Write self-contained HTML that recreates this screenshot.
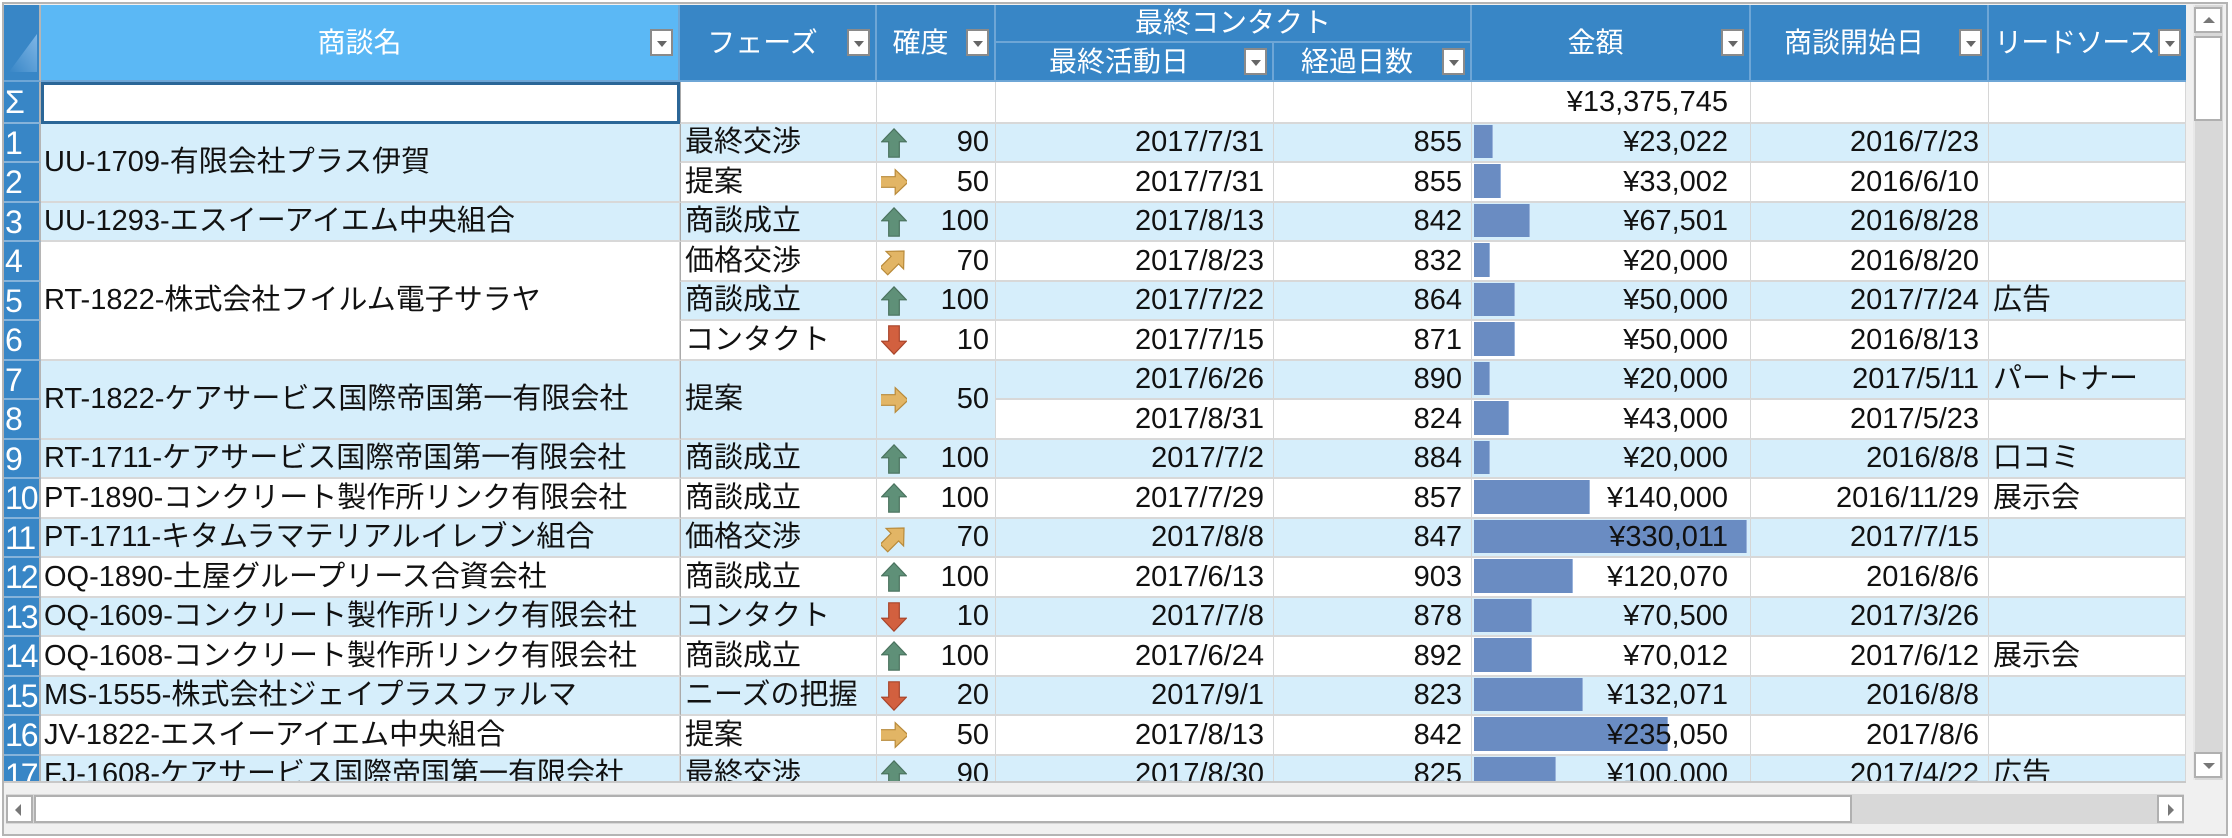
<!DOCTYPE html>
<html><head><meta charset="utf-8">
<style>
*{box-sizing:border-box;margin:0;padding:0}
body{width:2232px;height:838px;background:#fff;overflow:hidden;font-family:"Liberation Sans","Noto Sans CJK JP",sans-serif;position:relative}
.frame{position:absolute;left:2px;top:2px;width:2226px;height:834px;border:2px solid #b4b4b4;background:#f0f0f0}
.grid{position:absolute;left:4px;top:5px;width:2182px;height:776px;overflow:hidden;background:#fff}
table{border-collapse:separate;border-spacing:0;table-layout:fixed;width:2182px}
td,th{overflow:hidden;white-space:nowrap;font-size:29px;color:#111;font-weight:normal;border-right:1px solid #d6d6d6;border-bottom:2px solid #d8d8d8;position:relative;line-height:1}
th{background:#3886c6;color:#fff;border-right:2px solid #6ea6d6;border-bottom:2px solid #6ea6d6;text-align:center;font-size:28px}
th.sel{background:#5bb8f5}
th .t{display:inline-block;padding-right:30px}
th.ls2 .t{padding-right:26px;letter-spacing:-1px}
.dd{position:absolute;right:5px;top:50%;margin-top:-14px;width:23px;height:27px;background:#fff;border:2px solid #8a8a8a}
.dd:after{content:"";position:absolute;left:5px;top:10px;border-left:5px solid transparent;border-right:5px solid transparent;border-top:6px solid #666}
td.rh{background:#3886c6;color:#fff;border-right:2px solid #b5b5b5;border-bottom:2px solid #86b3da;padding-left:1px;font-size:32px;text-align:left;letter-spacing:-2px}
td.sig{background:#5bb8f5}
tr.b td{background:#d6eefb}
tr.w td{background:#fff}
tr.b td.rh,tr.w td.rh{background:#3886c6}
td.n{padding-left:3px}
td.ph{padding-left:4px;border-left:1px solid #aaa}
td.r{text-align:right;padding-right:9px}
td.m{text-align:right;padding-right:22px}
td.p{text-align:right;padding-right:6px}
td.p svg{position:absolute;left:4px;top:50%;margin-top:-17px}
td.ls{padding-left:4px}
.bar{position:absolute;left:2px;top:1px;bottom:3px;background:#6a8cc2;border-right:1px solid #99b3db}
.mt{position:relative}
td.selc{border:3px solid #2b6697;background:#fff}
</style></head><body>
<svg width="0" height="0" style="position:absolute">
<defs>
<polygon id="arr" points="11,1 21.5,12 15.5,12 15.5,25 6.5,25 6.5,12 0.5,12"/>
</defs>
</svg>
<div class="frame"></div>
<div class="grid">
<table>
<colgroup><col style="width:37px"><col style="width:639px"><col style="width:197px"><col style="width:119px"><col style="width:278px"><col style="width:198px"><col style="width:279px"><col style="width:238px"><col style="width:197px"></colgroup>
<tr style="height:38px">
<th rowspan="2" style="background:#3886c6;border-right:2px solid #b5b5b5"><svg width="30" height="40" style="position:absolute;right:2px;bottom:6px"><defs><linearGradient id="g" x1="0" y1="1" x2="1" y2="0"><stop offset="0" stop-color="#3886c6"/><stop offset="1" stop-color="#7fb6e6"/></linearGradient></defs><polygon points="30,0 30,38 2,38" fill="url(#g)"/></svg></th>
<th rowspan="2" class="sel"><span class="t" style="padding-right:0">商談名</span><span class="dd"></span></th>
<th rowspan="2"><span class="t">フェーズ</span><span class="dd"></span></th>
<th rowspan="2"><span class="t">確度</span><span class="dd"></span></th>
<th colspan="2">最終コンタクト</th>
<th rowspan="2"><span class="t">金額</span><span class="dd"></span></th>
<th rowspan="2"><span class="t">商談開始日</span><span class="dd"></span></th>
<th rowspan="2" class="ls2" style="border-right:none"><span class="t">リードソース</span><span class="dd"></span></th>
</tr>
<tr style="height:39px">
<th><span class="t">最終活動日</span><span class="dd"></span></th>
<th><span class="t">経過日数</span><span class="dd"></span></th>
</tr>
<tr style="height:42px" class="w">
<td class="rh sig">Σ</td><td class="selc"></td><td class="ph"></td><td></td><td></td><td></td><td class="m">¥13,375,745</td><td></td><td></td>
</tr>
<tr class="b" style="height:39px"><td class="rh">1</td><td class="n" rowspan="2">UU-1709-有限会社プラス伊賀</td><td class="ph">最終交渉</td><td class="p"><svg width="26" height="34" viewBox="0 0 22 26"><use href="#arr" fill="#5f9078" stroke="#4a725e"/></svg>90</td><td class="r">2017/7/31</td><td class="r">855</td><td class="m"><div class="bar" style="width:19px"></div><span class="mt">¥23,022</span></td><td class="r">2016/7/23</td><td class="ls"></td></tr>
<tr class="w" style="height:40px"><td class="rh">2</td><td class="ph">提案</td><td class="p"><svg width="26" height="34" viewBox="0 0 22 26"><use href="#arr" fill="#e2b565" stroke="#b88a3a" transform="rotate(90 11 13)"/></svg>50</td><td class="r">2017/7/31</td><td class="r">855</td><td class="m"><div class="bar" style="width:27px"></div><span class="mt">¥33,002</span></td><td class="r">2016/6/10</td><td class="ls"></td></tr>
<tr class="b" style="height:39px"><td class="rh">3</td><td class="n">UU-1293-エスイーアイエム中央組合</td><td class="ph">商談成立</td><td class="p"><svg width="26" height="34" viewBox="0 0 22 26"><use href="#arr" fill="#5f9078" stroke="#4a725e"/></svg>100</td><td class="r">2017/8/13</td><td class="r">842</td><td class="m"><div class="bar" style="width:56px"></div><span class="mt">¥67,501</span></td><td class="r">2016/8/28</td><td class="ls"></td></tr>
<tr class="w" style="height:40px"><td class="rh">4</td><td class="n" rowspan="3">RT-1822-株式会社フイルム電子サラヤ</td><td class="ph">価格交渉</td><td class="p"><svg width="26" height="34" viewBox="0 0 22 26"><use href="#arr" fill="#e2b565" stroke="#b88a3a" transform="rotate(45 11 13)"/></svg>70</td><td class="r">2017/8/23</td><td class="r">832</td><td class="m"><div class="bar" style="width:16px"></div><span class="mt">¥20,000</span></td><td class="r">2016/8/20</td><td class="ls"></td></tr>
<tr class="b" style="height:39px"><td class="rh">5</td><td class="ph">商談成立</td><td class="p"><svg width="26" height="34" viewBox="0 0 22 26"><use href="#arr" fill="#5f9078" stroke="#4a725e"/></svg>100</td><td class="r">2017/7/22</td><td class="r">864</td><td class="m"><div class="bar" style="width:41px"></div><span class="mt">¥50,000</span></td><td class="r">2017/7/24</td><td class="ls">広告</td></tr>
<tr class="w" style="height:40px"><td class="rh">6</td><td class="ph">コンタクト</td><td class="p"><svg width="26" height="34" viewBox="0 0 22 26"><use href="#arr" fill="#d2603f" stroke="#a8442a" transform="rotate(180 11 13)"/></svg>10</td><td class="r">2017/7/15</td><td class="r">871</td><td class="m"><div class="bar" style="width:41px"></div><span class="mt">¥50,000</span></td><td class="r">2016/8/13</td><td class="ls"></td></tr>
<tr class="b" style="height:39px"><td class="rh">7</td><td class="n" rowspan="2">RT-1822-ケアサービス国際帝国第一有限会社</td><td class="ph" rowspan="2">提案</td><td class="p" rowspan="2"><svg width="26" height="34" viewBox="0 0 22 26"><use href="#arr" fill="#e2b565" stroke="#b88a3a" transform="rotate(90 11 13)"/></svg>50</td><td class="r">2017/6/26</td><td class="r">890</td><td class="m"><div class="bar" style="width:16px"></div><span class="mt">¥20,000</span></td><td class="r">2017/5/11</td><td class="ls">パートナー</td></tr>
<tr class="w" style="height:40px"><td class="rh">8</td><td class="r">2017/8/31</td><td class="r">824</td><td class="m"><div class="bar" style="width:35px"></div><span class="mt">¥43,000</span></td><td class="r">2017/5/23</td><td class="ls"></td></tr>
<tr class="b" style="height:39px"><td class="rh">9</td><td class="n">RT-1711-ケアサービス国際帝国第一有限会社</td><td class="ph">商談成立</td><td class="p"><svg width="26" height="34" viewBox="0 0 22 26"><use href="#arr" fill="#5f9078" stroke="#4a725e"/></svg>100</td><td class="r">2017/7/2</td><td class="r">884</td><td class="m"><div class="bar" style="width:16px"></div><span class="mt">¥20,000</span></td><td class="r">2016/8/8</td><td class="ls">口コミ</td></tr>
<tr class="w" style="height:40px"><td class="rh">10</td><td class="n">PT-1890-コンクリート製作所リンク有限会社</td><td class="ph">商談成立</td><td class="p"><svg width="26" height="34" viewBox="0 0 22 26"><use href="#arr" fill="#5f9078" stroke="#4a725e"/></svg>100</td><td class="r">2017/7/29</td><td class="r">857</td><td class="m"><div class="bar" style="width:116px"></div><span class="mt">¥140,000</span></td><td class="r">2016/11/29</td><td class="ls">展示会</td></tr>
<tr class="b" style="height:39px"><td class="rh">11</td><td class="n">PT-1711-キタムラマテリアルイレブン組合</td><td class="ph">価格交渉</td><td class="p"><svg width="26" height="34" viewBox="0 0 22 26"><use href="#arr" fill="#e2b565" stroke="#b88a3a" transform="rotate(45 11 13)"/></svg>70</td><td class="r">2017/8/8</td><td class="r">847</td><td class="m"><div class="bar" style="width:273px"></div><span class="mt">¥330,011</span></td><td class="r">2017/7/15</td><td class="ls"></td></tr>
<tr class="w" style="height:40px"><td class="rh">12</td><td class="n">OQ-1890-土屋グループリース合資会社</td><td class="ph">商談成立</td><td class="p"><svg width="26" height="34" viewBox="0 0 22 26"><use href="#arr" fill="#5f9078" stroke="#4a725e"/></svg>100</td><td class="r">2017/6/13</td><td class="r">903</td><td class="m"><div class="bar" style="width:99px"></div><span class="mt">¥120,070</span></td><td class="r">2016/8/6</td><td class="ls"></td></tr>
<tr class="b" style="height:39px"><td class="rh">13</td><td class="n">OQ-1609-コンクリート製作所リンク有限会社</td><td class="ph">コンタクト</td><td class="p"><svg width="26" height="34" viewBox="0 0 22 26"><use href="#arr" fill="#d2603f" stroke="#a8442a" transform="rotate(180 11 13)"/></svg>10</td><td class="r">2017/7/8</td><td class="r">878</td><td class="m"><div class="bar" style="width:58px"></div><span class="mt">¥70,500</span></td><td class="r">2017/3/26</td><td class="ls"></td></tr>
<tr class="w" style="height:40px"><td class="rh">14</td><td class="n">OQ-1608-コンクリート製作所リンク有限会社</td><td class="ph">商談成立</td><td class="p"><svg width="26" height="34" viewBox="0 0 22 26"><use href="#arr" fill="#5f9078" stroke="#4a725e"/></svg>100</td><td class="r">2017/6/24</td><td class="r">892</td><td class="m"><div class="bar" style="width:58px"></div><span class="mt">¥70,012</span></td><td class="r">2017/6/12</td><td class="ls">展示会</td></tr>
<tr class="b" style="height:39px"><td class="rh">15</td><td class="n">MS-1555-株式会社ジェイプラスファルマ</td><td class="ph">ニーズの把握</td><td class="p"><svg width="26" height="34" viewBox="0 0 22 26"><use href="#arr" fill="#d2603f" stroke="#a8442a" transform="rotate(180 11 13)"/></svg>20</td><td class="r">2017/9/1</td><td class="r">823</td><td class="m"><div class="bar" style="width:109px"></div><span class="mt">¥132,071</span></td><td class="r">2016/8/8</td><td class="ls"></td></tr>
<tr class="w" style="height:40px"><td class="rh">16</td><td class="n">JV-1822-エスイーアイエム中央組合</td><td class="ph">提案</td><td class="p"><svg width="26" height="34" viewBox="0 0 22 26"><use href="#arr" fill="#e2b565" stroke="#b88a3a" transform="rotate(90 11 13)"/></svg>50</td><td class="r">2017/8/13</td><td class="r">842</td><td class="m"><div class="bar" style="width:194px"></div><span class="mt">¥235,050</span></td><td class="r">2017/8/6</td><td class="ls"></td></tr>
<tr class="b" style="height:39px"><td class="rh">17</td><td class="n">FJ-1608-ケアサービス国際帝国第一有限会社</td><td class="ph">最終交渉</td><td class="p"><svg width="26" height="34" viewBox="0 0 22 26"><use href="#arr" fill="#5f9078" stroke="#4a725e"/></svg>90</td><td class="r">2017/8/30</td><td class="r">825</td><td class="m"><div class="bar" style="width:82px"></div><span class="mt">¥100,000</span></td><td class="r">2017/4/22</td><td class="ls">広告</td></tr>
</table>
</div>
<div style="position:absolute;left:4px;top:781px;width:2182px;height:2px;background:#c8c8c8"></div>
<div style="position:absolute;left:2193px;top:5px;width:30px;height:775px;background:#d8d8d8;border-left:2px solid #e8e8e8"></div>
<div style="position:absolute;left:2194px;top:7px;width:28px;height:26px;background:#fff;border:2px solid #b0b0b0"><div style="position:absolute;left:7px;top:8px;border-left:6px solid transparent;border-right:6px solid transparent;border-bottom:6px solid #777"></div></div>
<div style="position:absolute;left:2194px;top:36px;width:28px;height:85px;background:#fff;border:2px solid #b0b0b0"></div>
<div style="position:absolute;left:2194px;top:752px;width:28px;height:26px;background:#fff;border:2px solid #b0b0b0"><div style="position:absolute;left:7px;top:9px;border-left:6px solid transparent;border-right:6px solid transparent;border-top:6px solid #777"></div></div>
<div style="position:absolute;left:6px;top:794px;width:2178px;height:30px;background:#d8d8d8"></div>
<div style="position:absolute;left:6px;top:795px;width:27px;height:28px;background:#fff;border:2px solid #b0b0b0"><div style="position:absolute;left:7px;top:7px;border-top:6px solid transparent;border-bottom:6px solid transparent;border-right:6px solid #777"></div></div>
<div style="position:absolute;left:34px;top:795px;width:1818px;height:28px;background:#fff;border:2px solid #b0b0b0"></div>
<div style="position:absolute;left:2157px;top:795px;width:27px;height:28px;background:#fff;border:2px solid #b0b0b0"><div style="position:absolute;left:9px;top:7px;border-top:6px solid transparent;border-bottom:6px solid transparent;border-left:6px solid #777"></div></div>
</body></html>
